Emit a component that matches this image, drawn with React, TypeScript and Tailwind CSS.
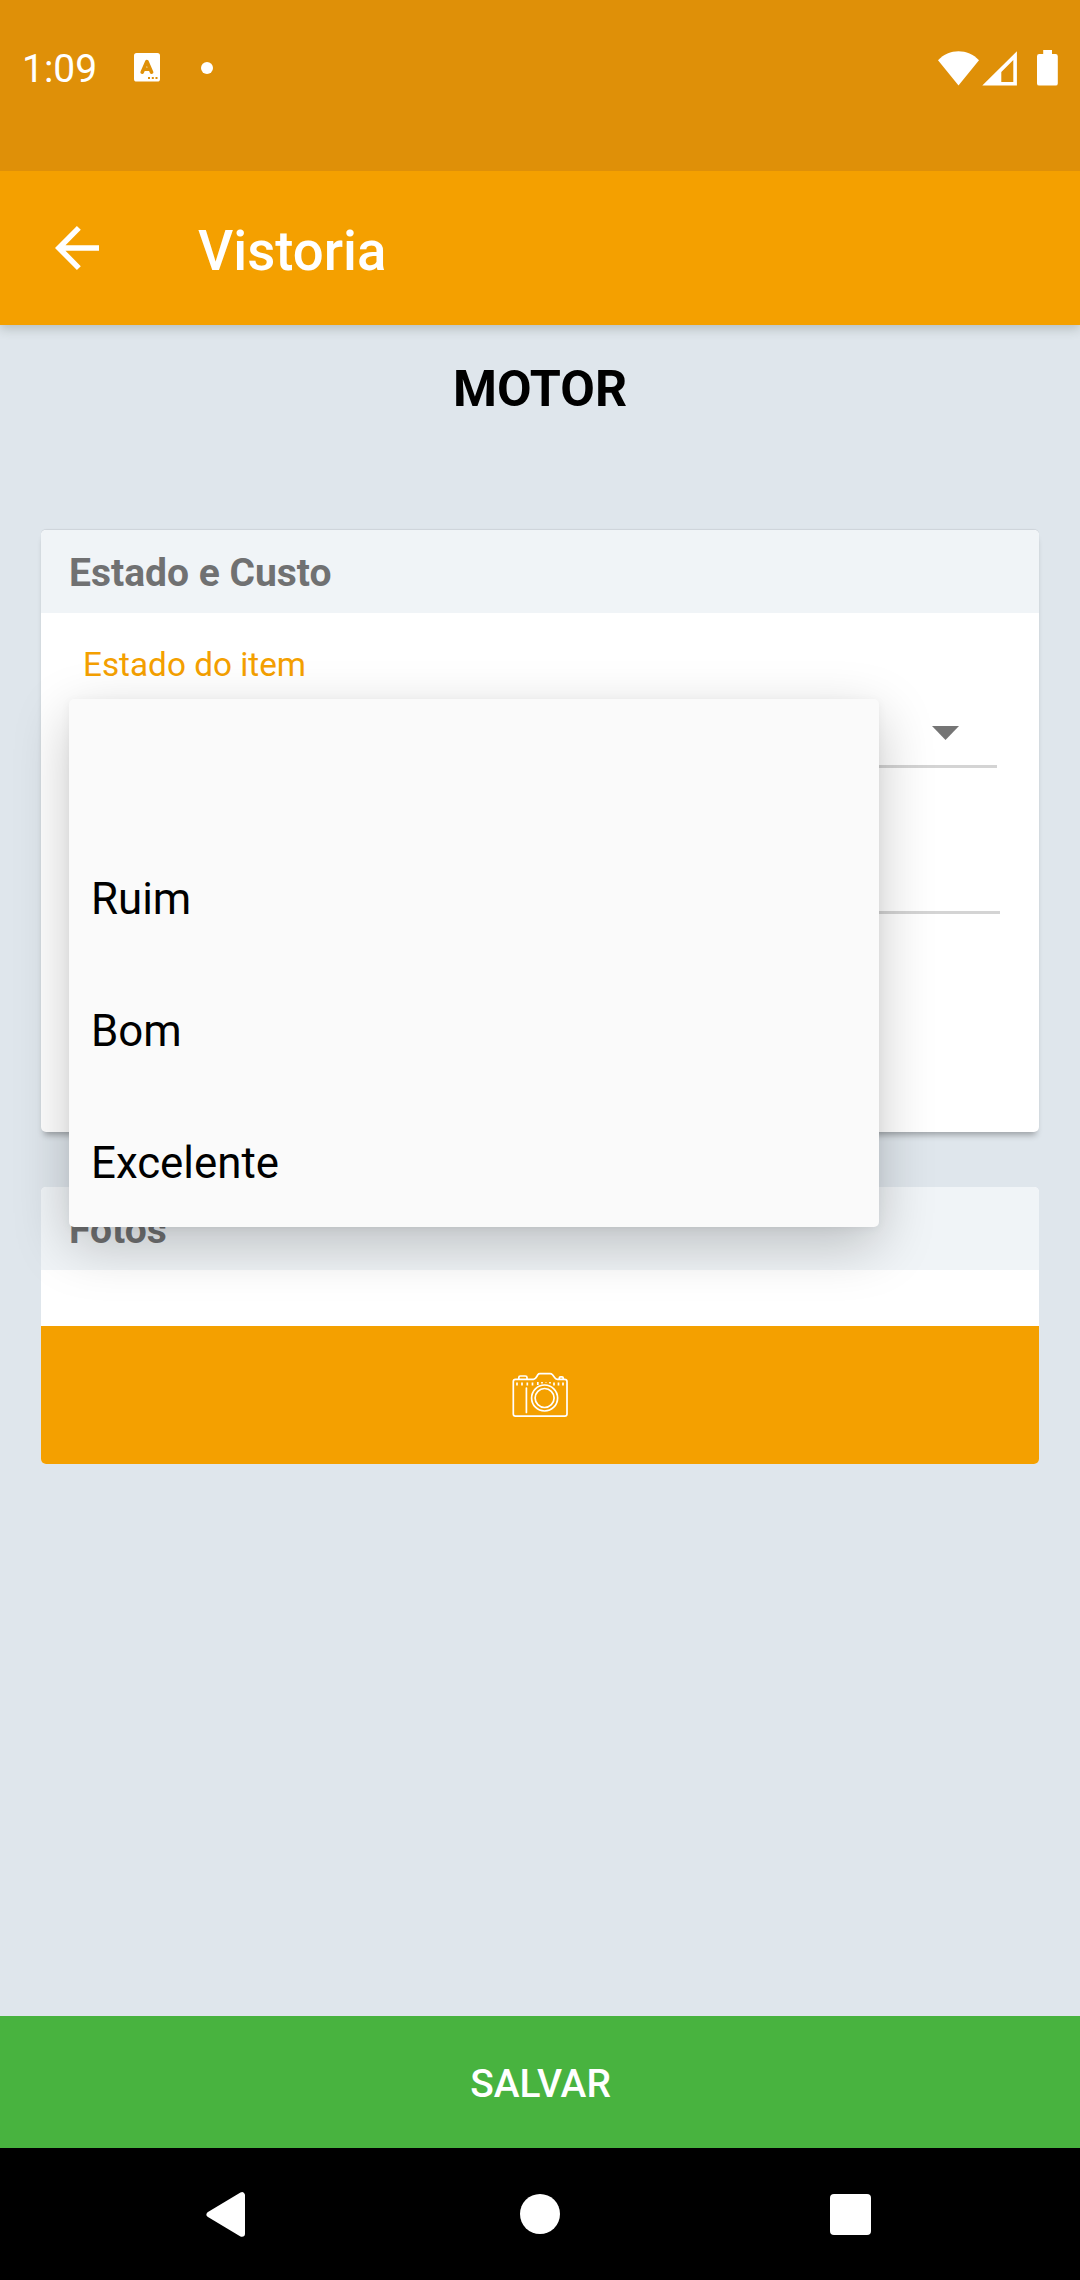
import type { ReactNode } from "react";

const OPTIONS = ["", "Ruim", "Bom", "Excelente"];

function StatusBar() {
  return (
    <div className="relative z-10 flex h-[171px] items-start bg-[#df9008] text-white">
      <div className="flex h-[135px] w-full items-center pl-[22px] pr-[22px]">
        <span className="w-[111.5px] pt-[4px] text-[39px] leading-none">1:09</span>
        <svg className="h-[29px] w-[26px]" viewBox="0 0 26 29">
          <rect width="26" height="28.6" rx="2.6" fill="#fff" />
          <path d="M8.2 19.2 12.9 8.6 17.6 19.2M9.8 16.2H16" fill="none" stroke="#df9008" strokeWidth="3.6" strokeLinecap="round" strokeLinejoin="round" />
          <path d="M14 24h2v2h-2zM17.8 24h2v2h-2zM21.5 24h2v2h-2z" fill="#df9008" />
        </svg>
        <span className="ml-[41.5px] size-3 rounded-full bg-white" />
        <svg className="ml-auto h-[36px] w-[120px]" viewBox="938 49 120 36">
          <path d="M938 59.3C949 47.3 968 47.3 979 59.3L958.5 84.4Z" fill="#fff" />
          <path fillRule="evenodd" d="M982.3 84.6 1016.9 50.2V84.6ZM1001.3 71V80.9H1013.3V58.9Z" fill="#fff" />
          <path d="M1043.2 49h8.8v4h3.6q2.2 0 2.2 2.2V82.400q0 2.200-2.200 2.200h-16.400q-2.200 0-2.200-2.200V55.200q0-2.200 2.200-2.200h4z" fill="#fff" />
        </svg>
      </div>
    </div>
  );
}

function AppBar() {
  return (
    <header className="relative flex h-[154px] items-center bg-[#f4a000] text-white shadow-[0_4px_10px_rgba(60,70,60,0.24)]">
      <svg className="ml-[55px] h-[44px] w-[44px]" viewBox="55 226 44 44">
        <path d="M99 245.200H65.500L80.800 229.800 76.900 226 55 248 76.900 270 80.800 266.200 65.500 250.700H99Z" fill="#fff" />
      </svg>
      <h1 className="ml-[99px] pt-[7px] text-[54.6px] font-medium leading-none">Vistoria</h1>
    </header>
  );
}

function Card({ title, className, children }: { title: string; className: string; children: ReactNode }) {
  return (
    <section className={`mx-[41px] flex flex-col overflow-hidden rounded-[5px] bg-white ${className}`}>
      <h3 className="flex h-[83px] shrink-0 items-center bg-[#f0f4f7] pl-[28px] pt-[4px] text-[39px] font-bold leading-none text-[#707172]">
        {title}
      </h3>
      {children}
    </section>
  );
}

function OptionMenu() {
  return (
    <ul className="absolute left-[69px] top-[699px] w-[810px] rounded-[5px] bg-[#fafafa] shadow-[0_18px_56px_rgba(0,0,0,0.22),0_2px_10px_rgba(0,0,0,0.05)]">
      {OPTIONS.map((o) => (
        <li key={o} className="flex h-[132px] items-center pl-[22px] pt-[6px] text-[43.8px] leading-none text-black">
          {o}
        </li>
      ))}
    </ul>
  );
}

function CameraIcon() {
  return (
    <svg className="h-[46px] w-[58px]" viewBox="511 1372 58 46" fill="none" stroke="#fff" strokeWidth="1.7" strokeLinejoin="round" strokeLinecap="round">
      <path d="M515.500 1379.300H533.500Q535.500 1379 536.800 1376.500L537.800 1374.800Q538.500 1373.700 540 1373.700H550Q551.500 1373.700 552.500 1374.800L555 1378Q556 1379.300 557.500 1379.300H564.500Q567 1379.300 567 1381.500V1414Q567 1416.200 564.700 1416.200H515.500Q513.300 1416.200 513.300 1414V1381.500Q513.300 1379.300 515.500 1379.300Z" />
      <path d="M518.800 1379V1377.500Q518.800 1376 520.300 1376H525.500Q527 1376 527 1377.500V1379M559.300 1379V1378Q559.300 1376.800 560.500 1376.800H562Q563.200 1376.800 563.200 1378V1379" />
      <path d="M526.400 1388V1412.500" />
      <path d="M517 1382.500v3M522 1382.500v3M527.300 1382.500v3M532.500 1382.500v3M537.800 1382v3M542 1382v1.500M546 1382v.5M550 1382v1.500M554 1382.500v3M558.500 1382.500v3M563 1382.500v3" strokeLinecap="butt" />
      <circle cx="544.600" cy="1398" r="13" />
      <circle cx="544.600" cy="1398" r="9.500" />
    </svg>
  );
}

function NavigationBar() {
  return (
    <nav className="flex h-[132px] items-center bg-black">
      <svg className="ml-[206px] h-[45px] w-[39px]" viewBox="0 0 39 45">
        <path d="M3.500 22.500 36 3.200V41.800Z" fill="#fff" stroke="#fff" strokeWidth="6" strokeLinejoin="round" />
      </svg>
      <span className="ml-[275px] size-10 rounded-full bg-white" />
      <span className="ml-[270px] mt-px size-[41px] rounded-[4px] bg-white" />
    </nav>
  );
}

export default function App() {
  return (
    <div className="relative flex h-[2280px] w-[1080px] flex-col overflow-hidden bg-[#dfe6ec] font-['Roboto',sans-serif]">
      <StatusBar />
      <AppBar />
      <main className="flex flex-1 flex-col">
        <h2 className="flex h-[205px] items-start justify-center pt-[39px] text-[50.2px] font-bold leading-none text-black">
          MOTOR
        </h2>
        <Card title="Estado e Custo" className="h-[602px] shadow-[0_6px_6px_-3px_rgba(0,0,0,0.3),0_-1px_1px_rgba(0,0,0,0.08)]">
          <div className="flex flex-col pt-[35px]">
            <label className="h-[34px] pl-[42px] text-[33.3px] leading-none text-[#f4a000]">Estado do item</label>
            <div className="ml-[42px] mr-[42px] flex h-[86px] items-center justify-end border-b-[3px] border-[#d4d4d4] pr-[38px]">
              <svg className="mt-[19px] h-[14px] w-[27px]" viewBox="0 0 27 14">
                <path d="M0 0H27L13.500 14Z" fill="#757575" />
              </svg>
            </div>
            <div className="ml-[42px] mr-[39px] h-[146px] border-b-[3px] border-[#d4d4d4]" />
          </div>
        </Card>
        <Card title="Fotos" className="mt-[55px] h-[277px]">
          <button className="mt-auto flex h-[138px] items-center justify-center bg-[#f4a000]">
            <CameraIcon />
          </button>
        </Card>
      </main>
      <button className="flex h-[132px] items-center justify-center bg-[#48b33f] pl-px pt-[5px] text-[38.9px] font-medium leading-none text-white">
        SALVAR
      </button>
      <NavigationBar />
      <OptionMenu />
    </div>
  );
}
